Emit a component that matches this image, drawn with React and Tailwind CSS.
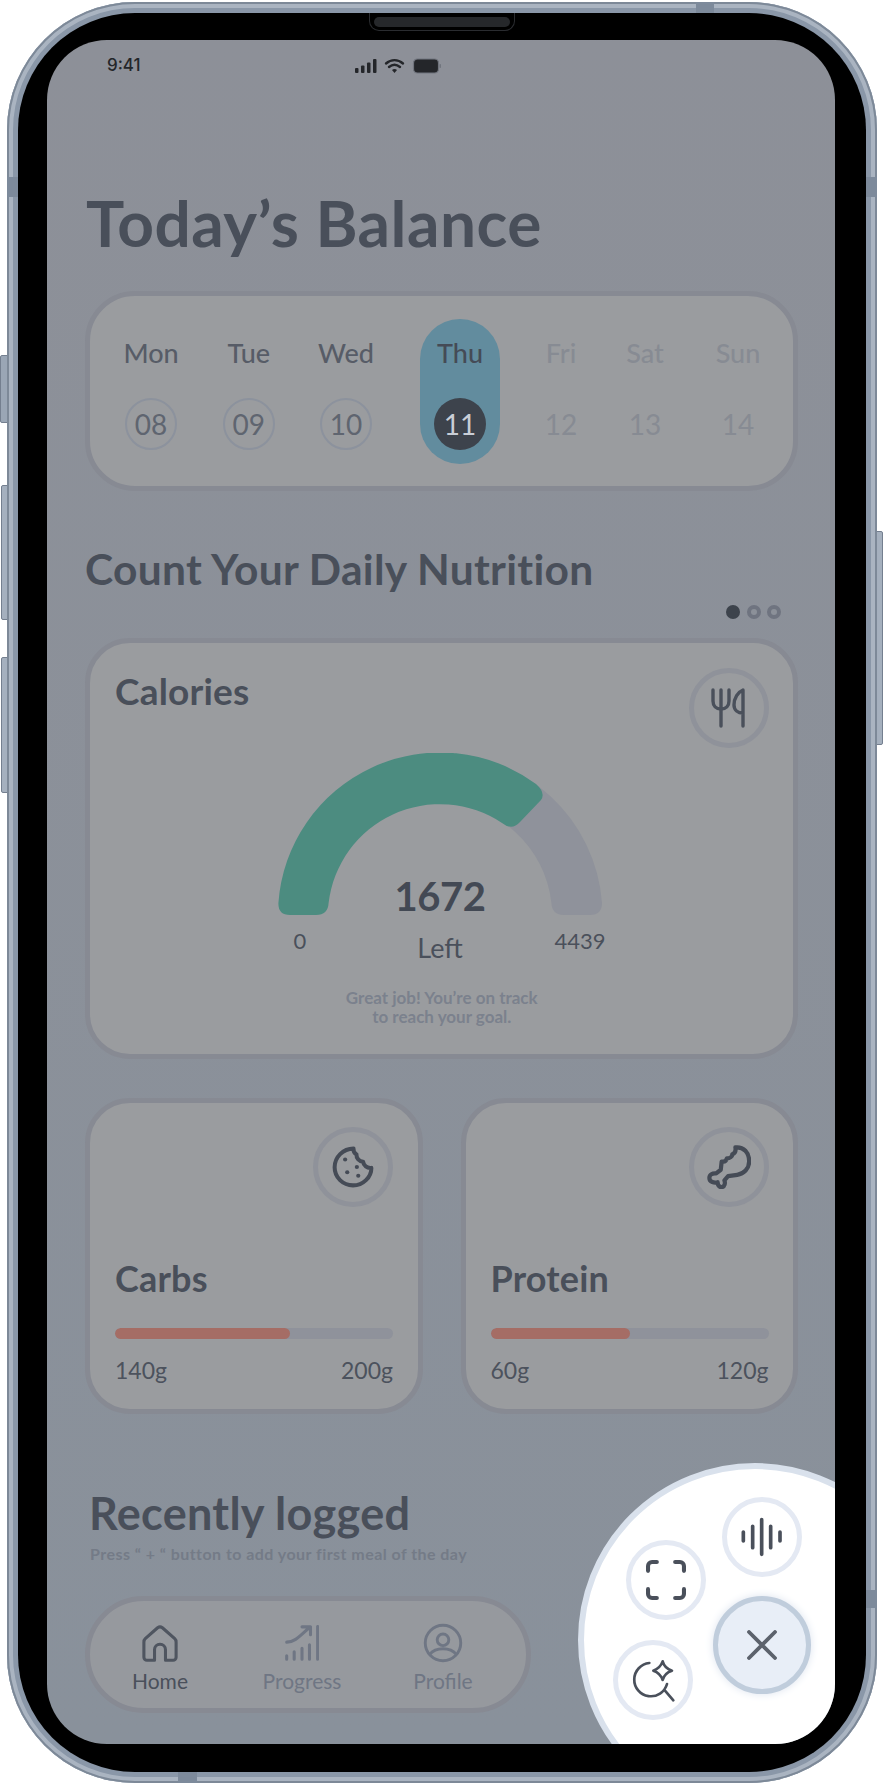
import React from "react";

const ink = "text-[#494f5a]";

const days = [
  { d: "Mon", n: "08", w: "w-[98px]", t: "text-[#575c67]" },
  { d: "Tue", n: "09", w: "w-[97.5px]", t: "text-[#575c67]" },
  { d: "Wed", n: "10", w: "w-[97px]", t: "text-[#575c67]" },
  { d: "Thu", n: "11", w: "w-[131px]", active: true },
  { d: "Fri", n: "12", w: "w-[71px]", t: "text-[#878b93]", dim: true },
  { d: "Sat", n: "13", w: "w-[97px]", t: "text-[#878b93]", dim: true },
  { d: "Sun", n: "14", w: "w-[89px]", t: "text-[#878b93]", dim: true },
];

function Fork() {
  return (
    <svg width="35" height="40" viewBox="0 0 35 40" fill="none" stroke="#4a505b" strokeWidth="3.400" strokeLinecap="round" strokeLinejoin="round">
      <path d="M2 2V13C2 18 5 21 10 21C15 21 18 18 18 13V2" />
      <path d="M10 2V38" />
      <path d="M32 38V2C27 4 23 10 23 17C23 22 27 25 32 25" />
    </svg>
  );
}

function Cookie() {
  return (
    <svg width="42" height="42" viewBox="0 0 24 24" fill="none" stroke="#454b56" strokeWidth="2.300" strokeLinecap="round" strokeLinejoin="round">
      <path d="M12.300 1.500C6.300 1.500 1.500 6.300 1.500 12.200C1.500 18 6.200 22.500 12 22.500C17.800 22.500 22.500 17.800 22.500 12.500C20 12.800 18 11.200 17.800 9C15.500 8.800 13.800 7 14 4.800C12.800 4.300 12.200 3 12.300 1.500Z" />
      <circle cx="7.500" cy="7.700" r="1.200" fill="#454b56" stroke="none" />
      <circle cx="14.200" cy="12" r="1.200" fill="#454b56" stroke="none" />
      <circle cx="8.700" cy="15" r="1.200" fill="#454b56" stroke="none" />
      <circle cx="15" cy="17" r="1.200" fill="#454b56" stroke="none" />
    </svg>
  );
}

function Leg() {
  return (
    <svg width="44" height="44" viewBox="0 0 24 24" fill="none" stroke="#454b56" strokeWidth="2.300" strokeLinecap="round" strokeLinejoin="round">
      <path d="M15.500 1.300C20 0.800 23 4.300 23 8.800C23 13 20 15.800 16.500 16.300L11.500 17L9.500 19.300C10 20.500 9.800 23 7.800 23C6.300 23 5.800 21.500 5.800 20.300C4 20.800 1.300 20.300 1.300 18C1.300 16 3 15.300 5 15.500L7.500 13.500L8 9C9.500 9.300 10.500 8.700 10.800 7.300C12.500 7.300 13.800 6.300 13.800 5C15.300 4.500 15.800 3 15.500 1.300Z" />
    </svg>
  );
}

function IconCircle({ children }) {
  return (
    <div className="w-[80px] h-[80px] shrink-0 rounded-full border-[5px] border-[#8f929a] flex items-center justify-center">
      {children}
    </div>
  );
}

function Macro({ title, icon, pct, a, b }) {
  return (
    <div className="box-border h-[316px] rounded-[45px] border-[5px] border-[#878a93] bg-[#9a9c9f] pt-[24px] pl-[25px] pr-[24.500px] flex flex-col">
      <div className="flex justify-end">
        <IconCircle>{icon}</IconCircle>
      </div>
      <div className={`mt-[48px] h-[46px] leading-[46px] text-[36px] font-bold tracking-[0.2px] ${ink}`}>{title}</div>
      <div className="mt-[27px] h-[11px] rounded-full bg-[#8f929b] overflow-hidden">
        <div className={`h-full rounded-full bg-[#a56d65] ${pct}`} />
      </div>
      <div className="mt-[16px] flex justify-between text-[23px] leading-[30px] text-[#4c525d]">
        <span>{a}</span>
        <span>{b}</span>
      </div>
    </div>
  );
}

function Gauge() {
  return (
    <svg width="324" height="162" viewBox="0 0 324 162" className="block">
      <path
        d="M162 0A162 162 0 0 1 324 150Q324 162 312 162H286Q274 162 273.400 150A112 112 0 0 0 162 50Z"
        fill="#8f929b"
      />
      <path
        d="M0.400 150A162 162 0 0 1 258 31Q268 40 263 47L242 69Q234 78 224 70A112 112 0 0 0 50.600 150Q50 162 38 162H12Q0 162 0.400 150Z"
        fill="#4c8c80"
      />
    </svg>
  );
}

export default function App() {
  return (
    <div
      className="relative w-[884px] h-[1785px] bg-white overflow-hidden"
      style={{ fontFamily: "Lato, 'Noto Sans', sans-serif" }}
    >
      {/* side buttons */}
      <div className="absolute left-0 top-[355px] w-[8px] h-[68px] rounded-l-[2px] bg-[#9aa6b5] border border-[#747f8f]" />
      <div className="absolute left-[1px] top-[485px] w-[7px] h-[135px] rounded-l-[2px] bg-[#a5b0be] border border-[#747f8f]" />
      <div className="absolute left-[1px] top-[657px] w-[7px] h-[136px] rounded-l-[2px] bg-[#a5b0be] border border-[#747f8f]" />
      <div className="absolute left-[876px] top-[531px] w-[7px] h-[214px] rounded-r-[2px] bg-[#a5b0be] border border-[#747f8f]" />

      <div className="relative ml-[7px] mt-[2px] box-border w-[870px] h-[1781px] rounded-[128px] bg-[#8a97a8] shadow-[inset_0_0_0_2px_#7d8998,inset_0_0_0_6px_#aab4c1] p-[11px]">
        {/* antenna bands */}
        <div className="absolute left-0 top-[175px] w-[11px] h-[20px] bg-[#7d8a9b]" />
        <div className="absolute right-0 top-[175px] w-[11px] h-[20px] bg-[#7d8a9b]" />
        <div className="absolute left-[689px] top-0 w-[18px] h-[11px] bg-[#7d8a9b]" />
        <div className="absolute left-[171px] bottom-0 w-[19px] h-[11px] bg-[#7d8a9b]" />
        <div className="absolute right-0 top-[1588px] w-[11px] h-[18px] bg-[#7d8a9b]" />

        <div className="relative box-border w-full h-full rounded-[117px] bg-black p-[29px] pt-[27px] pb-[26px]">
          {/* notch */}
          <div className="absolute left-[351px] top-0 w-[146px] h-[18px] rounded-b-[10px] bg-black border border-t-0 border-[#2a2c30] flex items-center justify-center">
            <div className="w-[136px] h-[10px] rounded-full bg-[#26282b]" />
          </div>

          {/* screen */}
          <div className="relative w-[788px] h-[1704px] rounded-[60px] overflow-hidden bg-gradient-to-b from-[#8d9098] to-[#89919b] px-[38px] box-border pr-[37px]">
            {/* status bar */}
            <div className="-mx-[38px] pl-[60px] h-[52px] flex items-center">
              <span className="w-[248px] text-[17px] font-medium text-[#24262a]" style={{ fontFamily: "Inter, sans-serif" }}>9:41</span>
              <svg width="86" height="16" viewBox="0 0 86 16">
                <rect x="0" y="10" width="3.500" height="5" rx="1" fill="#24262a" />
                <rect x="6" y="7.500" width="3.500" height="7.500" rx="1" fill="#24262a" />
                <rect x="12" y="4.500" width="3.500" height="10.500" rx="1" fill="#24262a" />
                <rect x="18" y="1" width="3.500" height="14" rx="1" fill="#24262a" />
                <path d="M31 5.500C36 1 43 1 48 5.500" stroke="#24262a" strokeWidth="2.400" fill="none" strokeLinecap="round" />
                <path d="M34 9C37.500 6 41.500 6 45 9" stroke="#24262a" strokeWidth="2.400" fill="none" strokeLinecap="round" />
                <path d="M37 12L39.500 15L42 12C40.500 10.700 38.500 10.700 37 12Z" fill="#24262a" />
                <rect x="58.500" y="1" width="25" height="14" rx="4" fill="#24262a" stroke="#71757e" strokeWidth="1.200" />
                <rect x="84.500" y="6" width="1.500" height="4" rx="0.700" fill="#71757e" />
              </svg>
            </div>

            {/* title */}
            <h1 className={`ml-[1px] h-[199px] pt-[92px] box-border text-[64px] leading-[78px] font-bold tracking-[0.5px] ${ink}`}>Today’s Balance</h1>

            {/* calendar */}
            <div className="box-border h-[200px] rounded-[50px] border-[5px] border-[#878a93] bg-[#9a9c9f] pl-[12px] flex items-center">
              {days.map((x) => (
                <div key={x.d} className={`${x.w} shrink-0 flex justify-center`}>
                  <div className={`w-[80px] h-[145px] rounded-full flex flex-col items-center ${x.active ? "bg-[#628c9e]" : ""}`}>
                    <div className={`h-[70px] flex items-center text-[27px] font-medium ${x.active ? "text-[#454b56]" : x.t}`}>{x.d}</div>
                    <div
                      className={`mt-[9px] w-[52px] h-[52px] rounded-full box-border flex items-center justify-center text-[28px] ${
                        x.active
                          ? "bg-[#3d434c] text-[#c9ced6]"
                          : x.dim
                          ? "text-[#878b93]"
                          : "border-2 border-[#8c929d] text-[#5f6570]"
                      }`}
                    >
                      {x.n}
                    </div>
                  </div>
                </div>
              ))}
            </div>

            {/* heading */}
            <h2 className={`h-[147px] box-border pt-[50px] text-[42.500px] leading-[56px] font-bold tracking-[0.3px] ${ink}`}>
              Count Your Daily Nutrition
              <span className="mt-[8px] pr-[17px] flex justify-end gap-[6.500px]">
                <span className="w-[14px] h-[14px] rounded-full bg-[#3d434c]" />
                <span className="w-[14px] h-[14px] rounded-full border-[4px] border-[#6f7480]" />
                <span className="w-[14px] h-[14px] rounded-full border-[4px] border-[#6f7480]" />
              </span>
            </h2>

            {/* calories */}
            <div className="box-border h-[421px] rounded-[45px] border-[5px] border-[#878a93] bg-[#9a9c9f] pt-[25px] pl-[25px] pr-[24.500px]">
              <div className="flex justify-between items-start">
                <div className={`h-[46px] leading-[46px] text-[37px] font-bold tracking-[0.2px] ${ink}`}>Calories</div>
                <IconCircle>
                  <Fork />
                </IconCircle>
              </div>
              <div className="relative mt-[5px] w-[324px] ml-[163px]">
                <Gauge />
                <div className="absolute left-0 right-0 bottom-[-6px] text-center text-[40px] leading-[50px] font-bold tracking-[-0.5px] text-[#434954]">1672</div>
              </div>
              <div className="ml-[160px] w-[332px] flex justify-between items-start text-[#4a505b]">
                <span className="w-[50px] mt-[11px] text-center text-[22px] leading-[30px]">0</span>
                <span className="mt-[18px] ml-[2px] text-[27px] leading-[30px]">Left</span>
                <span className="w-[54px] mt-[11px] text-center text-[22px] leading-[30px]">4439</span>
              </div>
              <div className="mt-[25px] ml-[1px] text-center pr-[1px] text-[17px] leading-[19px] font-bold text-[#7b818d]">
                Great job! You’re on track
                <br />
                to reach your goal.
              </div>
            </div>

            {/* macros */}
            <div className="mt-[39px] grid grid-cols-2 gap-[38px]">
              <Macro title="Carbs" icon={<Cookie />} pct="w-[63%]" a="140g" b="200g" />
              <Macro title="Protein" icon={<Leg />} pct="w-[50%]" a="60g" b="120g" />
            </div>

            {/* recently logged */}
            <div className="ml-[4px] pt-[71px]">
              <div className={`h-[56px] leading-[56px] text-[45px] font-bold tracking-[0.3px] ${ink}`}>Recently logged</div>
              <div className="ml-[1px] h-[26px] leading-[26px] text-[16px] font-bold tracking-[0.45px] text-[#747b87]">Press “ + “ button to add your first meal of the day</div>
            </div>

            {/* nav */}
            <div className="mt-[29px] box-border w-[446px] h-[117px] rounded-full border-[5px] border-[#878a93] bg-[#96999e] flex items-start">
              {[
                {
                  l: "Home",
                  c: "text-[#4a505b]",
                  w: "w-[140px]",
                  i: (
                    <svg width="36" height="37" viewBox="0 0 104 108" fill="none" stroke="#4f5560" strokeWidth="9" strokeLinejoin="round">
                      <path d="M36 103H14A9 9 0 0 1 5 94V50Q5 44 9 40L45 8Q52 3 59 8L95 40Q99 44 99 50V94A9 9 0 0 1 90 103H68V72A16 16 0 0 0 36 72Z" />
                    </svg>
                  ),
                },
                {
                  l: "Progress",
                  c: "text-[#6f7684]",
                  w: "w-[144px]",
                  i: (
                    <svg width="34" height="36" viewBox="0 0 100 105" fill="none" stroke="#6f7684" strokeWidth="9" strokeLinecap="round" strokeLinejoin="round">
                      <path d="M5 90V100M27 78V100M50 68V100M72 58V100M96 4V100" />
                      <path d="M5 50C30 50 45 30 72 7M50 5H75V28" />
                    </svg>
                  ),
                },
                {
                  l: "Profile",
                  c: "text-[#6f7684]",
                  w: "w-[138px]",
                  i: (
                    <svg width="40" height="40" viewBox="0 0 124 124" fill="none" stroke="#6f7684" strokeWidth="9">
                      <circle cx="62" cy="62" r="55" />
                      <circle cx="62" cy="52" r="18" />
                      <path d="M20 98C40 74 84 74 104 98" />
                    </svg>
                  ),
                },
              ].map((t) => (
                <div key={t.l} className={`${t.w} shrink-0 flex flex-col items-center pt-[22px]`}>
                  <div className="h-[40px] flex items-center">{t.i}</div>
                  <div className={`mt-[4px] text-[21px] leading-[28px] ${t.c}`}>{t.l}</div>
                </div>
              ))}
            </div>

            {/* radial menu */}
            <div className="absolute left-[531px] top-[1423px] w-[354px] h-[354px] rounded-full bg-white border-[6px] border-[#d9e1ec]">
              <div className="absolute left-[42px] top-[71px] w-[80px] h-[80px] rounded-full border-[5px] border-[#e4e9f3] flex items-center justify-center">
                <svg width="40" height="40" viewBox="0 0 118 118" fill="none" stroke="#4a505b" strokeWidth="12" strokeLinecap="round" strokeLinejoin="round">
                  <path d="M32 6H18A12 12 0 0 0 6 18V32M86 6H100A12 12 0 0 1 112 18V32M6 86V100A12 12 0 0 0 18 112H32M112 86V100A12 12 0 0 1 100 112H86" />
                </svg>
              </div>
              <div className="absolute left-[138px] top-[28px] w-[80px] h-[80px] rounded-full border-[5px] border-[#e4e9f3] flex items-center justify-center">
                <svg width="44" height="40" viewBox="540 232 132 116" fill="none" stroke="#4a505b" strokeWidth="11" strokeLinecap="round">
                  <path d="M550 275V302M578 258V322M605 238V342M632 258V322M660 275V302" />
                </svg>
              </div>
              <div className="absolute left-[29px] top-[171px] w-[80px] h-[80px] rounded-full border-[5px] border-[#e4e9f3] flex items-center justify-center">
                <svg width="45" height="45" viewBox="210 650 135 135" fill="none" stroke="#4a505b" strokeWidth="8" strokeLinecap="round" strokeLinejoin="round">
                  <path d="M265 665A50 50 0 1 0 318 728" />
                  <path d="M312 748L337 777" />
                  <path d="M305 660Q310 680 333 688Q310 695 305 716Q298 695 277 688Q298 680 305 660Z" />
                </svg>
              </div>
              <div className="absolute left-[129px] top-[127px] w-[98px] h-[98px] box-border rounded-full border-[5px] border-[#c0cddc] bg-[#e8eef7] shadow-[0_0_8px_#dde4ef] flex items-center justify-center">
                <svg width="30" height="30" viewBox="0 0 30 30" fill="none" stroke="#5c626c" strokeWidth="3.800" strokeLinecap="round">
                  <path d="M2 2L28 28M28 2L2 28" />
                </svg>
              </div>
            </div>
          </div>
        </div>
      </div>
    </div>
  );
}
